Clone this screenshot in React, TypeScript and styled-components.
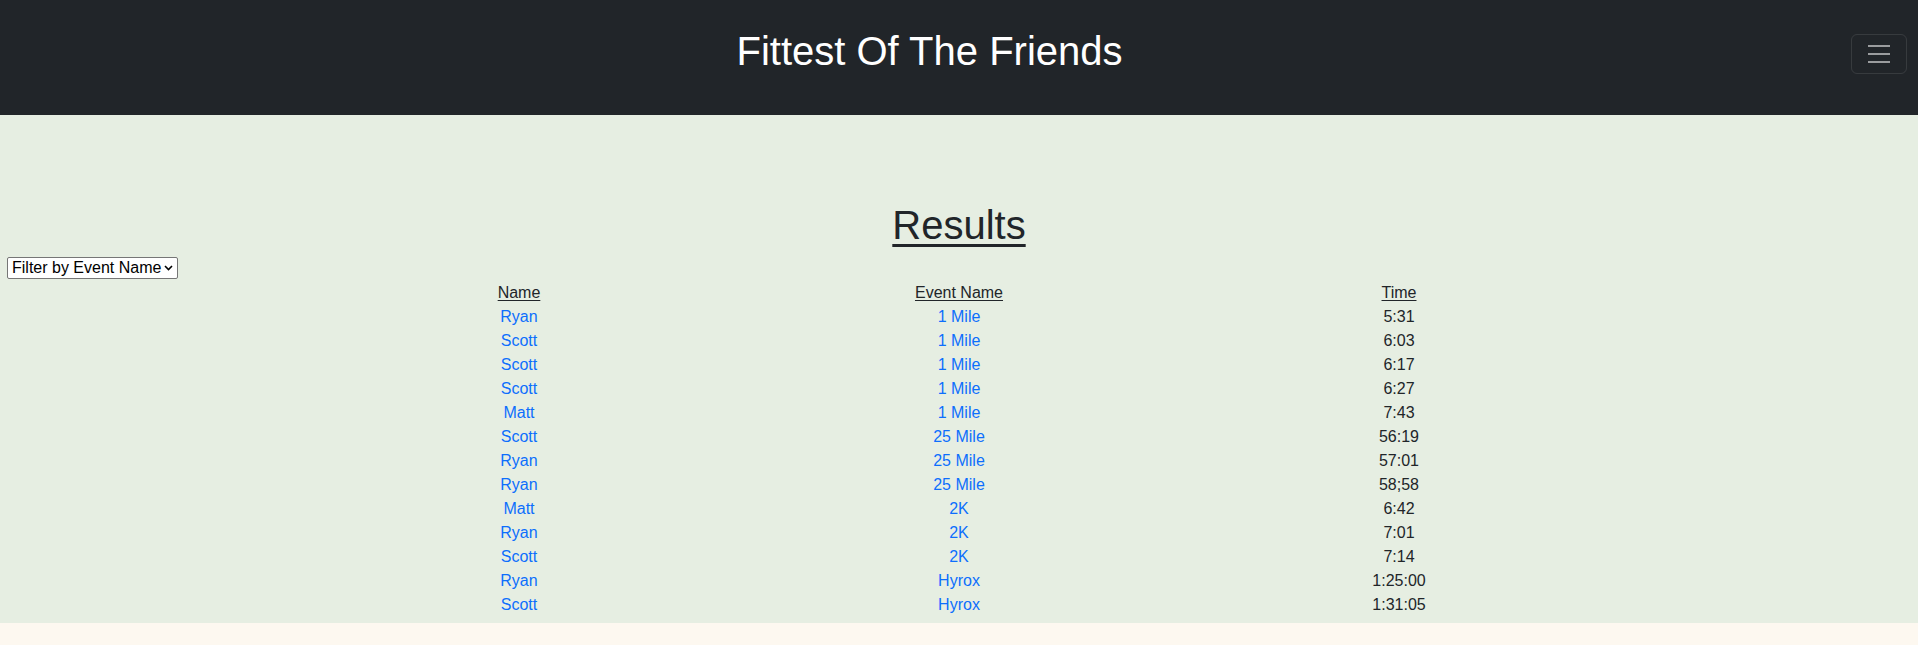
import React from "react";
import styled, { createGlobalStyle } from "styled-components";

const GlobalStyle = createGlobalStyle`
  html, body {
    margin: 0;
    padding: 0;
    background: #fdf8f0;
    font-family: "Liberation Sans", Arial, Helvetica, sans-serif;
    color: #212529;
  }
  * { box-sizing: border-box; }
`;

const Header = styled.header`
  display: flex;
  align-items: flex-start;
  height: 115px;
  padding: 27px 11px 0 8px;
  background: #212529;
`;

const Title = styled.h1`
  flex: 1;
  margin: 0;
  font-size: 40px;
  line-height: 48px;
  font-weight: 400;
  color: #ffffff;
  text-align: center;
`;

const Toggler = styled.button`
  display: flex;
  align-items: center;
  justify-content: center;
  width: 56px;
  height: 40px;
  margin-top: 7px;
  padding: 4px 12px;
  background: transparent;
  border: 1px solid rgba(255, 255, 255, 0.1);
  border-radius: 6px;
  cursor: pointer;
`;

const Main = styled.main`
  background: #e6eee2;
  padding: 86px 0 6px;
`;

const Heading = styled.h2`
  margin: 0 0 8px;
  font-size: 40px;
  line-height: 48px;
  font-weight: 400;
  text-align: center;
  text-decoration: underline;
  text-decoration-thickness: 3px;
  text-underline-offset: 5px;
`;

const SelectWrap = styled.div`
  position: relative;
  width: 171px;
  height: 22px;
  margin: 1px 0 2px 7px;
`;

const FilterSelect = styled.select`
  appearance: none;
  -webkit-appearance: none;
  display: block;
  width: 100%;
  height: 100%;
  margin: 0;
  padding: 0 0 0 4px;
  font-family: "Liberation Sans", Arial, sans-serif;
  font-size: 16px;
  line-height: 20px;
  color: #000;
  background: #fff;
  border: 1px solid #767676;
  border-radius: 2px;
  outline: none;
`;

const Chevron = styled.svg`
  position: absolute;
  right: 5px;
  top: 8px;
  pointer-events: none;
`;

const Table = styled.table`
  width: 1320px;
  margin: 0 auto;
  border-collapse: collapse;
  table-layout: fixed;
  font-size: 16px;
  line-height: 24px;
`;

const HeadCell = styled.th`
  padding: 0;
  font-weight: 400;
  text-align: center;
  text-decoration: underline;
  text-underline-offset: 2px;
`;

const Cell = styled.td`
  padding: 0;
  text-align: center;
`;

const Link = styled.a`
  color: #0d6efd;
  text-decoration: none;
`;

const results: [string, string, string][] = [
  ["Ryan", "1 Mile", "5:31"],
  ["Scott", "1 Mile", "6:03"],
  ["Scott", "1 Mile", "6:17"],
  ["Scott", "1 Mile", "6:27"],
  ["Matt", "1 Mile", "7:43"],
  ["Scott", "25 Mile", "56:19"],
  ["Ryan", "25 Mile", "57:01"],
  ["Ryan", "25 Mile", "58;58"],
  ["Matt", "2K", "6:42"],
  ["Ryan", "2K", "7:01"],
  ["Scott", "2K", "7:14"],
  ["Ryan", "Hyrox", "1:25:00"],
  ["Scott", "Hyrox", "1:31:05"],
];

export default function App() {
  return (
    <>
      <GlobalStyle />
      <Header>
        <Title>Fittest Of The Friends</Title>
        <Toggler aria-label="Toggle navigation">
          <svg width="30" height="30" viewBox="0 0 30 30">
            <path
              d="M4 7h22M4 15h22M4 23h22"
              stroke="rgba(255,255,255,0.55)"
              strokeWidth="2"
              strokeLinecap="butt"
            />
          </svg>
        </Toggler>
      </Header>
      <Main>
        <Heading>Results</Heading>
        <SelectWrap>
          <FilterSelect defaultValue="">
            <option value="">Filter by Event Name</option>
            <option value="1 Mile">1 Mile</option>
            <option value="25 Mile">25 Mile</option>
            <option value="2K">2K</option>
            <option value="Hyrox">Hyrox</option>
          </FilterSelect>
          <Chevron width="9" height="6" viewBox="0 0 9 6">
            <path d="M1 1l3.5 3.5L8 1" fill="none" stroke="#000" strokeWidth="1.6" />
          </Chevron>
        </SelectWrap>
        <Table>
          <thead>
            <tr>
              <HeadCell>Name</HeadCell>
              <HeadCell>Event Name</HeadCell>
              <HeadCell>Time</HeadCell>
            </tr>
          </thead>
          <tbody>
            {results.map(([name, event, time], i) => (
              <tr key={i}>
                <Cell>
                  <Link href="#">{name}</Link>
                </Cell>
                <Cell>
                  <Link href="#">{event}</Link>
                </Cell>
                <Cell>{time}</Cell>
              </tr>
            ))}
          </tbody>
        </Table>
      </Main>
    </>
  );
}
